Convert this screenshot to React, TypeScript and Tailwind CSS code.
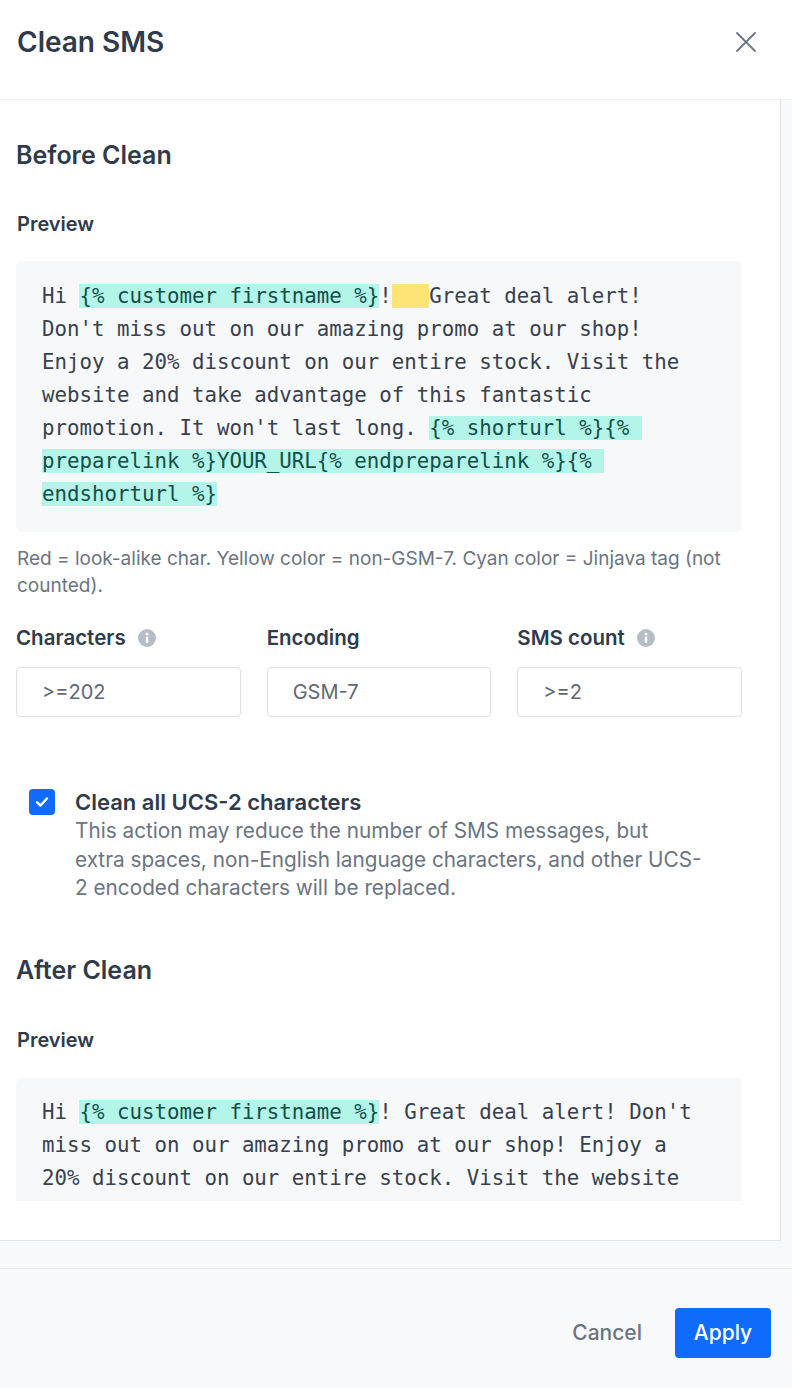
import React from "react";

const mono = "font-['DejaVu_Sans_Mono',monospace]";

function Cyan({ children }: { children: React.ReactNode }) {
  return <span className="bg-[#b3f5e8] text-[#124f49]">{children}</span>;
}

function InfoIcon() {
  return (
    <span className="inline-flex h-[18px] w-[18px] items-center justify-center rounded-full bg-[#b7bdc6]">
      <svg width="18" height="18" viewBox="0 0 18 18">
        <circle cx="9" cy="5.2" r="1.4" fill="#fff" />
        <rect x="7.8" y="7.6" width="2.4" height="6.4" rx="0.8" fill="#fff" />
      </svg>
    </span>
  );
}

function Field({ label, value, info }: { label: string; value: string; info?: boolean }) {
  return (
    <div className="flex flex-col">
      <div className="flex h-[28px] items-center gap-[12px] text-[20.5px] font-semibold text-[#2f3b4b]">
        <span>{label}</span>
        {info && <InfoIcon />}
      </div>
      <div className="mt-[15px] flex h-[50px] items-center rounded-[4px] border border-[#dde1e6] bg-white pl-[25px] text-[20px] text-[#5f6875]">
        {value}
      </div>
    </div>
  );
}

export default function App() {
  return (
    <div className="flex h-[1388px] w-[792px] flex-col overflow-hidden bg-white font-['Inter',sans-serif]">
      <header className="flex h-[100px] shrink-0 items-center justify-between border-b border-[#eef0f2] pb-[16px] pl-[17px] pr-[36px]">
        <h1 className="text-[28px] font-semibold leading-[34px] text-[#2f3b4b]">Clean SMS</h1>
        <svg width="20" height="20" viewBox="0 0 20 20">
          <path d="M1 1 L19 19 M19 1 L1 19" stroke="#6b7684" strokeWidth="1.8" strokeLinecap="round" />
        </svg>
      </header>

      <div className="flex h-[1141px] shrink-0">
        <div className="w-[781px] overflow-hidden border-r border-b border-[#e3e5e8] pl-[16px] pr-[38px]">
          <h2 className="mt-[39px] text-[25px] font-semibold leading-[32px] text-[#2f3b4b]">Before Clean</h2>
          <h3 className="mt-[39px] pl-[1px] text-[20px] font-semibold leading-[28px] text-[#2f3b4b]">Preview</h3>
          <div
            className={`mt-[23px] rounded-[6px] bg-[#f7f8fa] pb-[21px] pl-[26px] pr-[26px] pt-[19px] ${mono} whitespace-pre-wrap text-[20.75px] leading-[33px] text-[#37404d]`}
          >
            {"Hi "}
            <Cyan>{"{% customer firstname %}"}</Cyan>
            {"!"}
            <span className="bg-[#fee476]">{"\u00a0\u00a0\u00a0"}</span>
            {"Great deal alert! Don't miss out on our amazing promo at our shop! Enjoy a 20% discount on our entire stock. Visit the website and take advantage of this fantastic promotion. It won't last long. "}
            <Cyan>{"{% shorturl %}{% preparelink %}YOUR_URL{% endpreparelink %}{% endshorturl %}"}</Cyan>
          </div>
          <p className="mt-[13px] pl-[1px] text-[19px] leading-[27px] text-[#6b7480]">
            Red = look-alike char. Yellow color = non-GSM-7. Cyan color = Jinjava tag (not
            <br />
            counted).
          </p>

          <div className="mt-[25px] grid grid-cols-3 gap-[26px]">
            <Field label="Characters" value=">=202" info />
            <Field label="Encoding" value="GSM-7" />
            <Field label="SMS count" value=">=2" info />
          </div>

          <div className="mt-[70px] flex items-start gap-[20px] pl-[13px]">
            <span className="mt-[2px] flex h-[26px] w-[26px] shrink-0 items-center justify-center rounded-[4px] bg-[#0f6cfb]">
              <svg width="16" height="16" viewBox="0 0 16 16">
                <path d="M3 8.3 L6.5 11.5 L13 4.5" stroke="#fff" strokeWidth="2.4" fill="none" strokeLinecap="round" strokeLinejoin="round" />
              </svg>
            </span>
            <div className="flex flex-col">
              <div className="text-[22px] font-semibold leading-[30px] text-[#2f3b4b]">Clean all UCS-2 characters</div>
              <p className="whitespace-nowrap text-[20.75px] leading-[28.5px] text-[#6b7480]">
                This action may reduce the number of SMS messages, but
                <br />
                extra spaces, non-English language characters, and other UCS-
                <br />2 encoded characters will be replaced.
              </p>
            </div>
          </div>

          <h2 className="mt-[51px] text-[25px] font-semibold leading-[32px] text-[#2f3b4b]">After Clean</h2>
          <h3 className="mt-[40px] pl-[1px] text-[20px] font-semibold leading-[28px] text-[#2f3b4b]">Preview</h3>
          <div
            className={`mt-[24px] h-[123px] overflow-hidden rounded-t-[6px] bg-[#f7f8fa] pl-[26px] pr-[26px] pt-[18px] ${mono} whitespace-pre-wrap text-[20.75px] leading-[33px] text-[#37404d]`}
          >
            {"Hi "}
            <Cyan>{"{% customer firstname %}"}</Cyan>
            {"! Great deal alert! Don't miss out on our amazing promo at our shop! Enjoy a 20% discount on our entire stock. Visit the website and take advantage of this fantastic promotion. It won't last long. "}
            <Cyan>{"{% shorturl %}{% preparelink %}YOUR_URL{% endpreparelink %}{% endshorturl %}"}</Cyan>
          </div>
        </div>
        <div className="flex-1 bg-[#f8f9fa]" />
      </div>

      <div className="h-[27px] shrink-0 bg-[#f8f9fa]" />

      <footer className="flex flex-1 items-start justify-end gap-[33px] border-t border-[#e6e8eb] bg-[#f8f9fa] pr-[21px] pt-[39px]">
        <button className="h-[50px] text-[21px] font-medium text-[#6b7480]">Cancel</button>
        <button className="h-[50px] w-[96px] rounded-[4px] bg-[#0f6cfb] text-[21px] font-medium text-white">Apply</button>
      </footer>
    </div>
  );
}
